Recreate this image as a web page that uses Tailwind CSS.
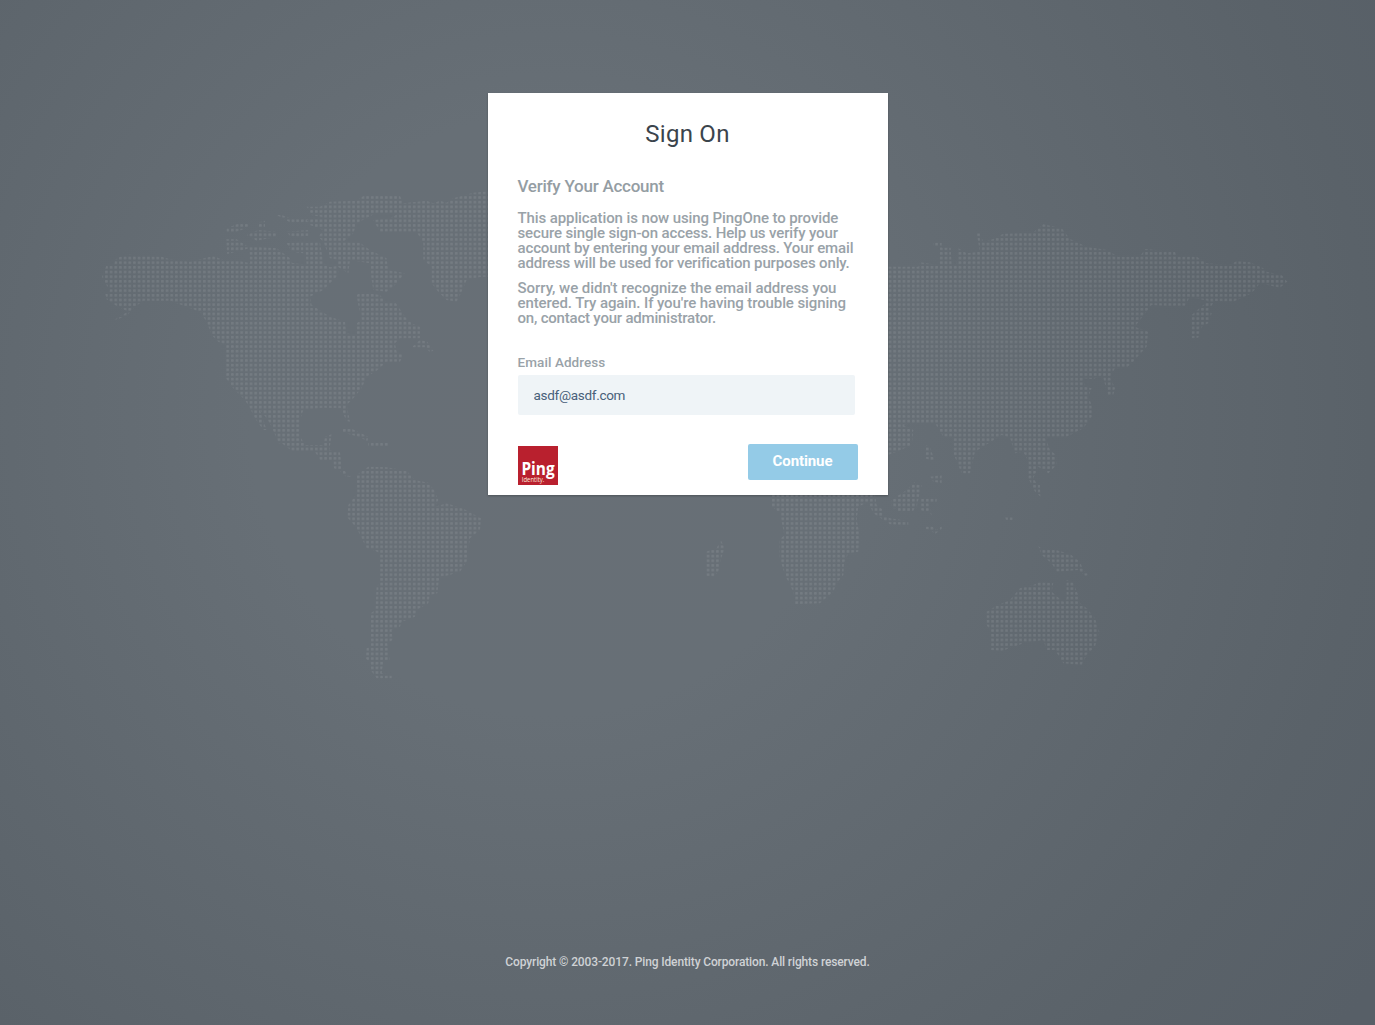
<!DOCTYPE html>
<html lang="en">
<head>
<meta charset="utf-8">
<title>Sign On</title>
<script src="https://cdn.jsdelivr.net/npm/@tailwindcss/browser@4"></script>
</head>
<body class="relative flex h-[1025px] flex-col items-center overflow-hidden bg-[#5a626a] bg-[radial-gradient(circle_at_550px_415px,#686f76_0px,#676f76_300px,#5a6269_820px,#575f67_1000px)] font-[Roboto,sans-serif]">

<svg class="absolute inset-0 h-full w-full" viewBox="0 0 1375 1025" aria-hidden="true">
  <defs>
    <pattern id="dots" width="4.664" height="4.657" patternUnits="userSpaceOnUse" x="225.4" y="265.1">
      <rect x="1" y="1" width="2.6" height="2.6" rx=".6" fill="#fff" fill-opacity=".09"/>
    </pattern>
    <clipPath id="world">
      <!-- Alaska, Canada, United States -->
      <path transform="translate(90 180) scale(.3333)" d="M36 290L50 256L72 258L75 240L90 230L120 224L215 230L240 238L300 245L370 228L400 240L450 243L480 250L478 205L412 222L408 178L440 178L475 200L500 200L560 205L600 235L605 248L650 255L645 190L690 185L700 250L720 262L740 258L745 275L740 290L700 330L660 350L665 375L720 410L765 425L770 460L795 465L800 430L815 420L805 375L800 345L815 337L870 345L890 370L915 365L945 410L965 430L990 440L990 475L930 475L915 490L920 515L940 525L930 545L890 545L860 572L830 590L815 625L790 655L770 675L780 725L768 722L755 685L700 683L640 690L630 720L630 790L566 790L545 740L530 715L510 690L530 750L520 750L495 715L480 685L465 660L430 625L408 595L408 495L385 485L365 465L350 425L330 395L290 380L240 362L160 362L130 385L110 408L75 420L85 410L115 395L75 375L50 358L46 342L60 330L42 305Z"/>
      <!-- Arctic islands and Greenland -->
      <path transform="translate(90 180) scale(.3333)" d="M850 120L870 155L980 155L1000 190L1000 240L1025 260L1025 310L1045 335L1070 360L1100 365L1115 335L1130 300L1175 290L1210 290L1210 32L1150 38L1090 55L1070 68L1050 62L1030 70L1010 62L940 70L930 48L820 48L800 62L720 65L690 80L650 80L665 105L700 112L650 120L660 135L700 150L685 170L700 185L720 235L745 240L740 258L775 280L780 240L840 250L845 300L850 330L890 335L915 315L945 280L895 270L890 235L840 210L810 188L760 185L790 160L800 130L860 98L930 98L900 115Z
      M410 145L440 133L475 128L475 142L440 155L410 158ZM470 165L505 150L560 155L560 170L500 182ZM500 129L525 122L525 142L505 142ZM560 105L575 105L605 117L655 117L655 127L600 127ZM590 155L655 150L655 168L625 172L600 168ZM590 190L640 185L640 220L605 215ZM665 185L690 190L680 225L660 215ZM965 502L990 480L1012 485L1030 512L1020 516L1005 502Z"/>
      <!-- Mexico and the Caribbean -->
      <path transform="translate(230 400) scale(.3333)" d="M100 0L210 0L208 60L208 105L225 135L280 135L285 110L305 103L298 150L330 157L335 200L360 232L380 212L370 222L350 232L330 212L312 205L310 182L270 180L255 155L185 152L145 122L145 90L125 65ZM335 86L360 84L415 110L412 124L390 112L335 96ZM415 126L475 126L475 138L415 138Z"/>
      <!-- South America -->
      <path transform="translate(300 430) scale(.3333)" d="M170 135L205 110L260 112L320 122L345 150L385 158L402 180L415 210L405 230L440 220L490 236L515 250L543 265L540 300L510 325L500 395L480 425L440 437L418 440L412 490L390 495L385 520L350 540L345 560L305 575L300 590L275 600L278 630L262 640L270 690L250 695L245 730L275 735L275 745L230 745L212 720L208 695L196 685L200 655L212 645L212 550L226 540L230 470L240 460L240 370L225 362L200 355L185 325L170 295L142 262L145 225L172 190Z"/>
      <!-- Europe and Asia -->
      <path transform="translate(880 215) scale(.3333)" d="M0 155L115 155L120 142L175 150L178 98L212 98L215 150L230 150L232 98L260 115L300 110L290 55L300 55L310 82L340 72L370 56L460 52L490 28L545 40L570 72L620 95L680 105L715 125L780 125L795 102L885 110L890 125L950 125L980 145L1050 150L1070 138L1110 142L1150 160L1160 170L1205 180L1222 200L1200 218L1140 205L1115 235L1060 260L1005 258L985 285L995 295L985 325L965 335L955 368L935 370L935 300L970 270L985 258L930 245L915 272L850 272L815 270L780 315L765 335L805 350L800 395L760 440L740 458L705 460L690 485L705 520L700 540L683 540L668 480L640 492L610 490L615 515L635 520L625 545L635 570L635 605L610 640L560 665L495 665L510 705L528 720L530 750L505 775L475 755L460 790L480 820L482 845L465 830L445 790L445 740L430 710L405 715L390 668L365 660L285 710L270 775L245 775L218 710L218 665L190 665L165 625L95 625L70 630L100 645L95 690L50 710L0 730ZM135 690L150 695L165 740L135 730ZM160 83L185 83L185 98L160 92ZM150 785L185 780L185 805L160 800ZM105 800L120 815L110 880L35 880L35 855L75 830ZM135 850L170 850L170 862L135 860Z"/>
      <!-- Africa, Indian Ocean islands, Australia -->
      <path transform="translate(690 485) scale(.3333)" d="M240 0L550 0L560 60L580 75L580 92L600 100L655 108L655 120L600 118L550 85L535 50L505 65L500 105L510 150L505 200L475 205L462 235L460 270L440 295L430 320L390 355L315 358L310 320L285 270L268 215L268 165L283 150L270 85L243 62ZM92 165L105 190L95 215L85 260L70 275L48 272L48 200L80 190ZM605 45L650 15L665 0L695 0L685 45L670 78L625 78ZM690 40L740 40L740 48L715 52L725 90L710 80L690 75ZM705 123L725 123L740 135L755 123L755 132L735 147L720 134L705 132ZM945 96L968 94L968 106L948 104ZM1030 0L1050 0L1050 32L1035 20ZM1045 183L1060 195L1090 193L1140 207L1170 230L1180 255L1198 270L1185 272L1165 255L1100 260L1085 235L1055 210Z
      M890 380L920 362L960 345L990 310L1030 300L1050 290L1090 295L1085 320L1120 350L1130 340L1130 285L1148 290L1165 330L1170 355L1190 370L1215 400L1228 440L1215 485L1190 510L1175 540L1120 535L1095 495L1070 495L1060 465L1000 475L935 498L903 495L903 440L890 420Z"/>
    </clipPath>
  </defs>
  <rect width="1375" height="1025" fill="url(#dots)" clip-path="url(#world)"/>
</svg>

<main class="relative mt-[93px] flex h-[402px] w-[400px] flex-col bg-white px-[30px] shadow-[0_1px_2px_rgba(0,0,0,0.25)]">
  <h1 class="mt-[25px] text-center text-2xl leading-8 tracking-[0.25px] text-[#3b444c]">Sign On</h1>
  <h2 class="mt-[26px] text-[17px] leading-5 font-medium tracking-[-0.24px] whitespace-nowrap text-[#949da3]">Verify Your Account</h2>
  <p class="mt-[15px] flex flex-col text-[15px] leading-[15px] font-medium whitespace-nowrap text-[#99a2a8]">
    <span class="tracking-[-0.1px]">This application is now using PingOne to provide</span>
    <span class="tracking-[-0.13px]">secure single sign-on access. Help us verify your</span>
    <span class="tracking-[-0.14px]">account by entering your email address. Your email</span>
    <span class="tracking-[-0.14px]">address will be used for verification purposes only.</span>
  </p>
  <p class="mt-[10px] flex flex-col text-[15px] leading-[15px] font-medium whitespace-nowrap text-[#99a2a8]">
    <span class="tracking-[-0.04px]">Sorry, we didn't recognize the email address you</span>
    <span class="tracking-[-0.1px]">entered. Try again. If you're having trouble signing</span>
    <span class="tracking-[-0.2px]">on, contact your administrator.</span>
  </p>
  <label for="email" class="mt-[28px] text-[13.5px] leading-4 font-medium tracking-[0.08px] text-[#99a2a8]">Email Address</label>
  <input id="email" type="text" value="asdf@asdf.com" class="mt-[5px] h-10 w-[337px] rounded-xs bg-[#eff4f7] px-4 text-[13.5px] tracking-[-0.3px] text-[#48607a] outline-none">
  <div class="mt-[29px] flex items-start justify-between">
    <svg class="mt-[2px] h-[39px] w-10" viewBox="0 0 40 39" role="img" aria-label="Ping Identity">
      <rect width="40" height="39" fill="#b9202e"/>
      <text x="3.4" y="29" font-family="Open Sans" font-weight="700" font-size="18.6" textLength="33.2" lengthAdjust="spacingAndGlyphs" fill="#fff">Ping</text>
      <text x="3.8" y="36" font-family="Open Sans" font-size="8" textLength="22.6" lengthAdjust="spacingAndGlyphs" fill="#fbe9dc">Identity.</text>
    </svg>
    <button class="h-9 w-[110px] rounded-xs bg-[#94cbe7] pb-[2px] text-[15px] font-bold tracking-[-0.1px] text-white">Continue</button>
  </div>
</main>

<footer class="relative mt-[459px] text-xs leading-4 font-medium tracking-[-0.13px] whitespace-nowrap text-[#cfd2d5]">Copyright © 2003-2017. Ping Identity Corporation. All rights reserved.</footer>
</body>
</html>
